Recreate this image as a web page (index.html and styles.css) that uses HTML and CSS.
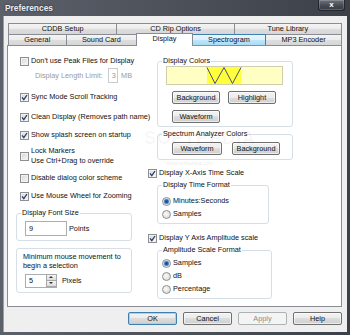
FILE: index.html
```html
<!DOCTYPE html>
<html lang="en">
<head>
    <meta charset="UTF-8">
    <meta name="viewport" content="width=device-width, initial-scale=1.0">
    <link rel="stylesheet" href="styles.css">
</head>
<body>
<div class="window">
    <div class="titlebar">
        <span class="title">Preferences</span>
        <span class="close">x</span>
    </div>
    <div class="client">
        <div class="tabs">
            <div class="tabrow">
                <div class="tab">CDDB Setup</div>
                <div class="tab">CD Rip Options</div>
                <div class="tab">Tune Library</div>
            </div>
            <div class="tabrow">
                <div class="tab">General</div>
                <div class="tab">Sound Card</div>
                <div class="tab active">Display</div>
                <div class="tab hot">Spectrogram</div>
                <div class="tab">MP3 Encoder</div>
            </div>
        </div>

        <div class="panel">
            <div class="col-left">
                <div class="check"><span class="cb"></span>Don't use Peak Files for Display</div>
                <div class="limit">
                    <span>Display Length Limit:</span>
                    <span class="edit off">3</span>
                    <span>MB</span>
                </div>
                <div class="check sp-9"><span class="cb on"><svg viewBox="0 0 7 7"><path d="M1 3.4 L2.8 5.6 L6 1"/></svg></span>Sync Mode Scroll Tracking</div>
                <div class="check sp-10"><span class="cb on"><svg viewBox="0 0 7 7"><path d="M1 3.4 L2.8 5.6 L6 1"/></svg></span>Clean Display (Removes path name)</div>
                <div class="check sp-8"><span class="cb on"><svg viewBox="0 0 7 7"><path d="M1 3.4 L2.8 5.6 L6 1"/></svg></span>Show splash screen on startup</div>
                <div class="check sp-6"><span class="cb"></span><span>Lock Markers<br>Use Ctrl+Drag to override</span></div>
                <div class="check sp-7"><span class="cb"></span>Disable dialog color scheme</div>
                <div class="check sp-8"><span class="cb on"><svg viewBox="0 0 7 7"><path d="M1 3.4 L2.8 5.6 L6 1"/></svg></span>Use Mouse Wheel for Zooming</div>

                <fieldset class="group font-size">
                    <legend>Display Font Size</legend>
                    <div class="inline">
                        <span class="edit wide">9</span>
                        <span>Points</span>
                    </div>
                </fieldset>

                <fieldset class="group mouse-move">
                    <p class="note">Minimum mouse movement to<br>begin a selection</p>
                    <div class="inline">
                        <span class="spin">
                            <span class="spin-val">5</span>
                            <span class="spin-btns"><span class="up"></span><span class="down"></span></span>
                        </span>
                        <span>Pixels</span>
                    </div>
                </fieldset>
            </div>

            <div class="col-right">
                <fieldset class="group colors">
                    <legend>Display Colors</legend>
                    <svg class="preview" viewBox="0 0 115 17" width="115" height="17">
                        <rect x="0" y="0" width="115" height="17" fill="#ffffc4"/>
                        <rect x="40" y="0" width="34" height="17" fill="#ffff3c"/>
                        <polyline points="40,0.5 48,16.5 57,0.5 65.5,16.5 74,0.5" fill="none" stroke="#4a4f78" stroke-width="1"/>
                    </svg>
                    <div class="btn-row">
                        <span class="btn">Background</span>
                        <span class="btn">Highlight</span>
                    </div>
                    <div class="btn-row">
                        <span class="btn">Waveform</span>
                    </div>
                </fieldset>

                <fieldset class="group spectrum">
                    <legend>Spectrum Analyzer Colors</legend>
                    <div class="btn-row">
                        <span class="btn w50">Waveform</span>
                        <span class="btn">Background</span>
                    </div>
                </fieldset>

                <div class="check axis sp-8"><span class="cb on"><svg viewBox="0 0 7 7"><path d="M1 3.4 L2.8 5.6 L6 1"/></svg></span>Display X-Axis Time Scale</div>

                <fieldset class="group time-format">
                    <legend>Display Time Format</legend>
                    <div class="radio first"><span class="rb on"></span>Minutes:Seconds</div>
                    <div class="radio"><span class="rb"></span>Samples</div>
                </fieldset>

                <div class="check axis sp-9"><span class="cb on"><svg viewBox="0 0 7 7"><path d="M1 3.4 L2.8 5.6 L6 1"/></svg></span>Display Y Axis Amplitude scale</div>

                <fieldset class="group amp-format">
                    <legend>Amplitude Scale Format</legend>
                    <div class="radio first-amp"><span class="rb on"></span>Samples</div>
                    <div class="radio"><span class="rb"></span>dB</div>
                    <div class="radio"><span class="rb"></span>Percentage</div>
                </fieldset>
            </div>

            <div class="watermark">SOFTPEDIA</div>
            <div class="watermark-url">www.softpedia.com</div>
        </div>

        <div class="buttons">
            <span class="btn dlg default">OK</span>
            <span class="btn dlg">Cancel</span>
            <span class="btn dlg disabled">Apply</span>
            <span class="btn dlg">Help</span>
        </div>
    </div>
</div>
</body>
</html>
```

FILE: styles.css
```css
* {
    box-sizing: border-box;
}
body {
    margin: 0;
    font-family: "Liberation Sans", Arial, sans-serif;
    font-size: 7.3px;
    line-height: 10px;
    color: #111;
}
.window {
    width: 350px;
    height: 335px;
    display: flex;
    flex-direction: column;
    padding: 0 3px 3px 3px;
    background: linear-gradient(to right, #5b606a, #4b4f58 55%, #3c4048);
}
.titlebar {
    height: 16px;
    display: flex;
    justify-content: space-between;
    align-items: flex-start;
}
.title {
    margin: 3px 0 0 2px;
    font-size: 8.4px;
    font-weight: bold;
    color: #eceef2;
    text-shadow: 0 0 2px #222;
}
.close {
    width: 27px;
    height: 11px;
    margin-right: 2px;
    border: 1px solid #24272c;
    border-top: none;
    border-radius: 0 0 3px 3px;
    background: linear-gradient(#6e727b, #43474f 60%, #393d44);
    box-shadow: inset 0 0 0 1px rgba(255, 255, 255, 0.18);
    color: #fff;
    font-weight: bold;
    font-size: 8px;
    line-height: 9px;
    text-align: center;
}
.client {
    flex: 1;
    display: flex;
    flex-direction: column;
    background: #efefef;
    padding: 7px 5px 0 4px;
    box-shadow: inset 1px 0 0 #9a9ea6;
}

/* tabs */
.tabs {
    margin-left: 1px;
}
.tabrow {
    display: flex;
    height: 11px;
}
.tab {
    flex: 1 1 auto;
    height: 11px;
    border: 1px solid #898c95;
    border-bottom: none;
    background: linear-gradient(#f4f4f4, #ebebeb 50%, #dedede 50%, #d6d6d6);
    text-align: center;
    line-height: 10px;
    white-space: nowrap;
}
.tab + .tab {
    margin-left: -1px;
}
.tab.hot {
    border-color: #3c7fb1;
    background: linear-gradient(#eaf6fd, #d9f0fc 50%, #bee6fd 50%, #a9dbf6);
    position: relative;
}
.tab.active {
    position: relative;
    z-index: 1;
    height: 13px;
    margin-top: -1px;
    margin-bottom: -1px;
    background: #fff;
}

/* page */
.panel {
    position: relative;
    height: 262px;
    display: flex;
    padding: 10px 0 0 8px;
    background: #fff;
    border: 1px solid #898c95;
}
.col-left {
    width: 116px;
    display: flex;
    flex-direction: column;
}
.col-right {
    width: 145px;
    margin-left: 16px;
    display: flex;
    flex-direction: column;
}

.check {
    display: flex;
    align-items: center;
    margin-left: 4px;
    white-space: nowrap;
    min-height: 10px;
}
.check.axis {
    margin-left: 0;
}
.sp-6 { margin-top: 6px; }
.sp-7 { margin-top: 7px; }
.sp-8 { margin-top: 8px; }
.sp-9 { margin-top: 9px; }
.sp-10 { margin-top: 10px; }

.cb {
    flex: none;
    width: 9px;
    height: 9px;
    margin-right: 2px;
    border: 1px solid #8e8f8f;
    background: linear-gradient(135deg, #d6d6d6, #f8f8f8);
    box-shadow: inset 0 0 0 1px #f2f2f2;
}
.cb svg {
    display: block;
    width: 7px;
    height: 7px;
}
.cb path {
    fill: none;
    stroke: #2a3c6c;
    stroke-width: 1.3;
}

.limit {
    display: flex;
    align-items: center;
    margin: 2px 0 0 19px;
    height: 15px;
    color: #9a9a9a;
    white-space: nowrap;
}
.edit {
    height: 15px;
    border: 1px solid #abadb3;
    background: #fff;
    padding-left: 3px;
    line-height: 13px;
}
.edit.off {
    width: 35px;
    margin: 0 3px 0 5px;
    border-color: #c9cbd0;
    color: #9a9a9a;
}
.edit.wide {
    width: 42px;
    margin-right: 2px;
}

.group {
    margin: 7px 0 0 0;
    padding: 0 0 4px 0;
    min-width: 0;
    border: 1px solid #d5dfe5;
    border-radius: 3px;
}
.group legend {
    margin-left: 4px;
    padding: 0 1px;
    line-height: 10px;
}
.inline {
    display: flex;
    align-items: center;
    white-space: nowrap;
}
.font-size .inline {
    margin: 3px 0 0 8px;
}
.mouse-move {
    padding: 3px 0 4px 6px;
}
.note {
    margin: 0;
    line-height: 9px;
}
.mouse-move .inline {
    margin: 4px 0 0 2px;
}
.spin {
    display: flex;
    width: 32px;
    height: 14px;
    margin-right: 5px;
    border: 1px solid #abadb3;
}
.spin-val {
    flex: 1;
    padding-left: 3px;
    line-height: 12px;
}
.spin-btns {
    width: 10px;
    display: flex;
    flex-direction: column;
    border-left: 1px solid #b8b8b8;
}
.spin-btns span {
    flex: 1;
    position: relative;
    background: linear-gradient(#f3f3f3, #dcdcdc);
    border: 1px solid #a8a8a8;
    margin: -1px -1px 0 -1px;
}
.spin-btns .up::after,
.spin-btns .down::after {
    content: "";
    position: absolute;
    left: 2px;
    top: 1px;
    border-left: 2px solid transparent;
    border-right: 2px solid transparent;
}
.spin-btns .up::after {
    border-bottom: 2px solid #333;
}
.spin-btns .down::after {
    border-top: 2px solid #333;
}

/* right column */
.colors {
    width: 136px;
    margin: 0 0 0 9px;
    padding-bottom: 3px;
}
.preview {
    display: block;
    margin: 1px 0 0 9px;
    outline: 1px solid #cfcfae;
}
.btn-row {
    display: flex;
    gap: 8px;
    margin: 7px 0 0 14px;
}
.btn-row + .btn-row {
    margin-top: 6px;
}
.btn {
    width: 48px;
    height: 13px;
    border: 1px solid #707070;
    border-radius: 2px;
    background: linear-gradient(#f3f3f3, #ebebeb 50%, #dddddd 50%, #cfcfcf);
    box-shadow: inset 0 0 0 1px rgba(255, 255, 255, 0.6);
    text-align: center;
    line-height: 11px;
    white-space: nowrap;
}
.btn.w50 {
    width: 50px;
}
.spectrum {
    width: 136px;
    margin: 2px 0 0 9px;
}
.spectrum .btn-row {
    margin-top: 3px;
    gap: 10px;
}
.time-format {
    width: 112px;
    margin: 2px 0 0 9px;
}
.amp-format {
    width: 115px;
    margin: 2px 0 0 9px;
}
.radio {
    display: flex;
    align-items: center;
    margin: 3px 0 0 4px;
    height: 10px;
}
.radio.first {
    margin-top: 6px;
}
.radio.first-amp {
    margin-top: 3px;
}
.rb {
    width: 9px;
    height: 9px;
    margin-right: 2px;
    border: 1px solid #8e8f8f;
    border-radius: 50%;
    background: radial-gradient(circle at 40% 40%, #fafafa, #d4d4d4);
}
.rb.on {
    background: radial-gradient(circle, #1d3f74 0, #2f62a8 1.5px, #7fb0e2 2.6px, #e6eef8 3.2px, #dedede 100%);
}

.watermark {
    position: absolute;
    left: 136px;
    top: 83px;
    font-size: 18px;
    font-weight: bold;
    letter-spacing: 1px;
    color: rgba(0, 0, 0, 0.04);
    line-height: 18px;
}
.watermark-url {
    position: absolute;
    left: 158px;
    top: 112px;
    font-size: 5.5px;
    color: rgba(0, 0, 0, 0.12);
}

/* dialog buttons */
.buttons {
    display: flex;
    justify-content: flex-end;
    gap: 6px;
    margin-top: 5px;
}
.btn.dlg {
    width: 49px;
}
.btn.default {
    border-color: #3c7fb1;
    box-shadow: inset 0 0 0 1px #9fd6f5;
}
.btn.disabled {
    border-color: #adb2b5;
    background: #f4f4f4;
    color: #8d8d8d;
    box-shadow: none;
}
```
